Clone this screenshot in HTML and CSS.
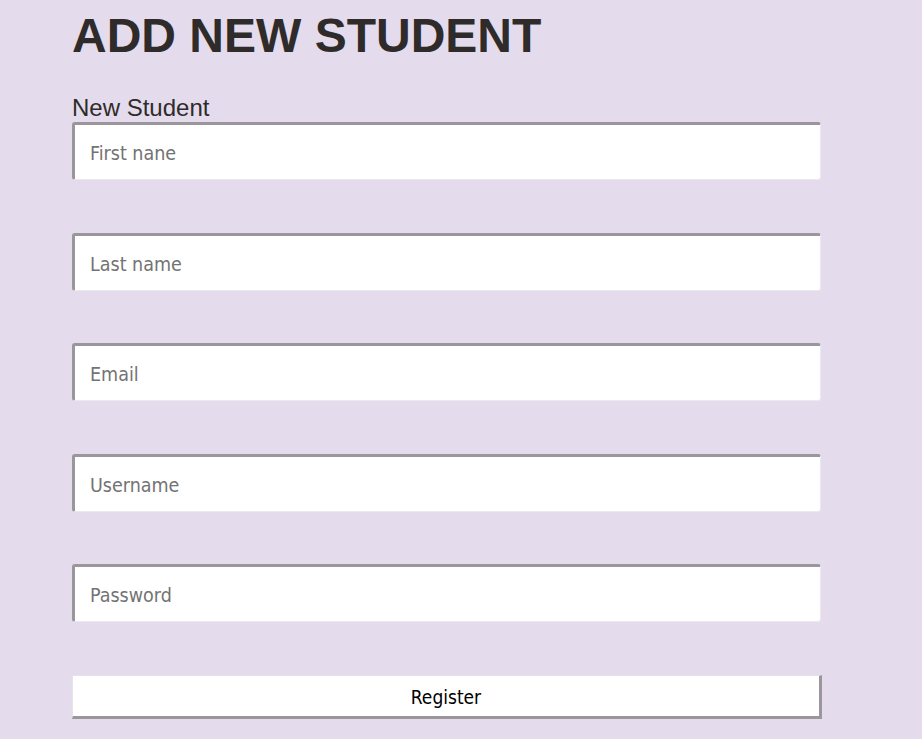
FILE: index.html
```html
<!DOCTYPE html>
<html>
<head>
<meta charset="utf-8">
<title>Add New Student</title>
<link rel="stylesheet" href="styles.css">
</head>
<body>
<div class="page">
  <h1 class="title">ADD NEW STUDENT</h1>
  <form class="form">
    <div class="label">New Student</div>
    <input class="field" type="text" placeholder="First nane">
    <input class="field" type="text" placeholder="Last name">
    <input class="field" type="email" placeholder="Email">
    <input class="field" type="text" placeholder="Username">
    <input class="field" type="password" placeholder="Password">
    <button class="submit" type="button">Register</button>
  </form>
</div>
</body>
</html>
```
FILE: styles.css
```css
html, body {
  margin: 0;
  padding: 0;
  background: #e4dcec;
}
.page {
  display: flex;
  flex-direction: column;
  padding: 8px 0 0 72px;
  width: 749px;
  font-family: "Liberation Sans", Arial, sans-serif;
  color: #2f2b2b;
}
.title {
  margin: 0;
  font-size: 48px;
  font-weight: bold;
  line-height: 55px;
}
.form {
  display: flex;
  flex-direction: column;
  margin-top: 31px;
}
.label {
  font-size: 24px;
  line-height: 28px;
}
.field {
  box-sizing: border-box;
  height: 58px;
  margin: 0 0 52.5px 0;
  padding: 3px 15px 0 15px;
  border-style: solid;
  border-width: 3px 1px 1px 3px;
  border-color: #9a969c #ece8ee #ece8ee #9a969c;
  border-radius: 3px;
  background: #fff;
  font-family: "DejaVu Sans Condensed", "DejaVu Sans", Tahoma, sans-serif;
  font-stretch: condensed;
  font-size: 19.5px;
  color: #333;
  outline: none;
}
.field::placeholder {
  color: #737373;
}
.submit {
  box-sizing: border-box;
  width: 750px;
  height: 44px;
  padding: 3px 0 0 0;
  border-style: solid;
  border-width: 1px 3px 3px 1px;
  border-color: #e6e2e8 #9a969c #9a969c #e6e2e8;
  background: #fff;
  font-family: "DejaVu Sans Condensed", "DejaVu Sans", Tahoma, sans-serif;
  font-stretch: condensed;
  font-size: 19px;
  color: #000;
}
```
